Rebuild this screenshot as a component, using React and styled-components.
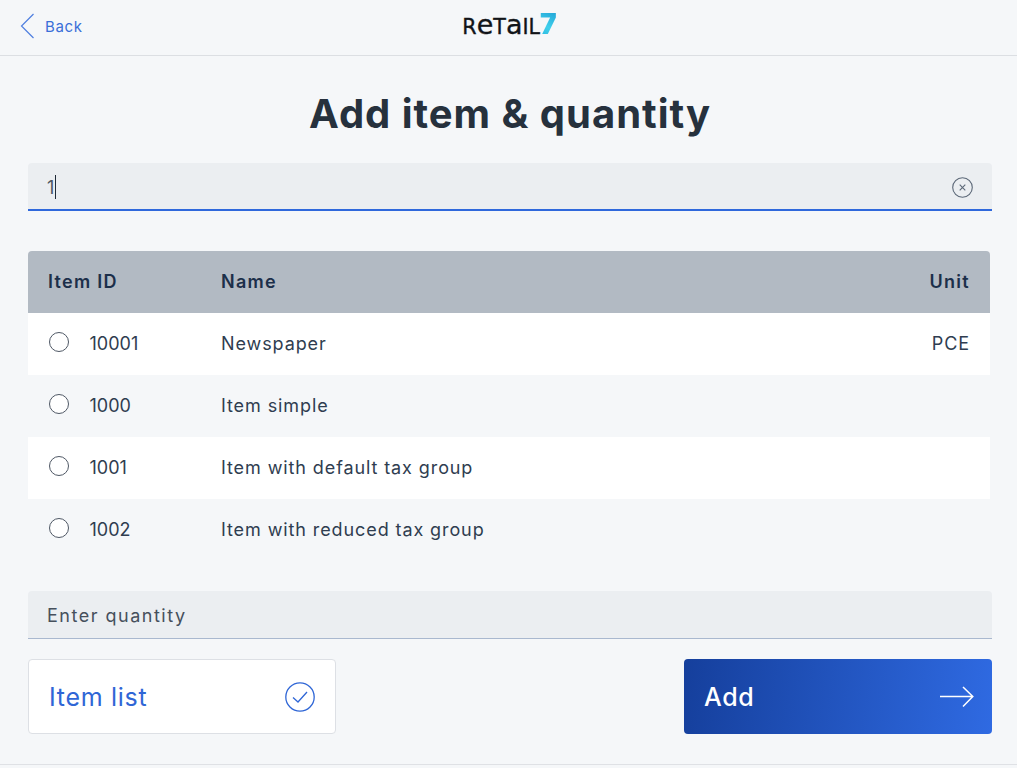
import React from "react";
import styled, { createGlobalStyle } from "styled-components";

const Global = createGlobalStyle`
  html, body { margin: 0; padding: 0; background: #f5f7f9; }
  body { font-family: "Inter", "Noto Sans", sans-serif; color: #2a3644; }
  * { box-sizing: border-box; }
`;

const Page = styled.div`
  width: 1017px; height: 768px; display: flex; flex-direction: column; overflow: hidden;
  background: #f5f7f9;
`;
const Header = styled.header`
  height: 56px; flex: none; display: grid; grid-template-columns: 1fr auto 1fr; align-items: center;
  border-bottom: 1px solid #dcdfe3;
`;
const BackLink = styled.a`
  display: flex; align-items: center; gap: 10px; margin: -3px 0 0 20px;
  color: #3a6fd8; font-size: 15px; letter-spacing: .65px;
`;
const Logo = styled.div`
  display: flex; align-items: baseline; margin: -8px 0 0 2px;
  font-family: "DejaVu Sans", sans-serif; color: #111418; font-weight: 400; font-size: 20.6px; line-height: 1;
  -webkit-text-stroke: .35px #111418;
`;
const LogoLow = styled.span`
  font-size: 27px;
`;
const LogoSeven = styled.span`
  font-family: "Inter", sans-serif; font-weight: 900; font-size: 28px; line-height: 1; -webkit-text-stroke: 0;
  background: linear-gradient(205deg, #1f9fd4 0%, #3fd0ec 60%, #2ab4dc 100%);
  -webkit-background-clip: text; background-clip: text; color: transparent;
`;
const Main = styled.main`
  flex: 1; display: flex; flex-direction: column; padding: 0 25px 0 28px;
`;
const Title = styled.h1`
  margin: 32px 0 23px; height: 52px; line-height: 52px; text-align: center; font-size: 40px; font-weight: 700; color: #26313d; letter-spacing: .98px;
`;
const Field = styled.div`
  height: 48px; display: flex; align-items: center; justify-content: space-between; padding: 2px 19px 0 19px;
  background: #ebeef1; border-radius: 4px 4px 0 0; border-bottom: ${p => p.$active ? "2px solid #2f68dc" : "1px solid #a9b8cf"};
  font-size: 18px; color: #46505c; letter-spacing: ${p => p.$active ? 0.4 : 1.5}px;
`;
const Typed = styled.span`
  display: flex; align-items: center; color: #4c5661;
`;
const Caret = styled.span`
  display: inline-block; width: 1px; height: 24px; background: #1f2a37;
`;
const Table = styled.div`
  width: 962px; margin: 40px 0 30px; display: flex; flex-direction: column;
`;
const Row = styled.div`
  height: 62px; display: grid; grid-template-columns: 173px 1fr auto; align-items: center; padding: 0 20px;
  font-size: 18px; letter-spacing: .9px; color: #2f3d50;
  background: ${p => p.$white ? "#fff" : "transparent"};
`;
const HeadRow = styled(Row)`
  background: #b2bac3; border-radius: 4px 4px 0 0; font-weight: 600; color: #1c2f4a; letter-spacing: 1.3px;
`;
const IdCell = styled.div`
  display: flex; align-items: center; gap: 21.5px; margin-top: -1px; letter-spacing: 0;
`;
const Radio = styled.span`
  width: 20px; height: 20px; margin: -3px 0 0 0; border-radius: 50%; border: 1px solid #4f5865; background: #fff; flex: none;
  position: relative; left: .5px;
`;
const Cell = styled.div`
  margin-top: -1px;
`;
const Actions = styled.div`
  margin-top: 20px; display: flex; justify-content: space-between;
`;
const ListButton = styled.button`
  width: 308px; height: 75px; display: flex; align-items: center; justify-content: space-between;
  padding: 0 20px; background: #fff; border: 1px solid #dde0e5; border-radius: 4px; color: #2f66d6;
  font: 400 25px "Inter", sans-serif; letter-spacing: .7px;
`;
const AddButton = styled.button`
  width: 308px; height: 75px; display: flex; align-items: center; justify-content: space-between;
  padding: 0 18px 0 20px; border: 0; border-radius: 4px; color: #fff;
  background: linear-gradient(97deg, #153f9c 0%, #2f6ae2 100%);
  font: 500 25px "Inter", sans-serif; letter-spacing: .6px;
`;
const FootRule = styled.div`
  height: 4px; flex: none; border-top: 1px solid #dfe1e5;
`;

const items = [
  { id: "10001", name: "Newspaper", unit: "PCE" },
  { id: "1000", name: "Item simple" },
  { id: "1001", name: "Item with default tax group" },
  { id: "1002", name: "Item with reduced tax group" },
];

export default function App() {
  return (
    <Page>
      <Global />
      <Header>
        <BackLink>
          <svg width="15" height="26" viewBox="0 0 15 26" fill="none" stroke="#4f7fe0" strokeWidth="1.2"><path d="M13.5 1 1.5 13l12 12" /></svg>
          Back
        </BackLink>
        <Logo>R<LogoLow>e</LogoLow>T<LogoLow>a</LogoLow>IL<LogoSeven>7</LogoSeven></Logo>
        <div />
      </Header>
      <Main>
        <Title>Add item &amp; quantity</Title>
        <Field $active>
          <Typed>1<Caret /></Typed>
          <svg width="21" height="21" viewBox="0 0 21 21" fill="none" stroke="#5c6878" strokeWidth="1.1">
            <circle cx="10.5" cy="10.5" r="9.8" /><path d="M7.7 7.7l5.6 5.6M13.3 7.7l-5.6 5.6" />
          </svg>
        </Field>
        <Table>
          <HeadRow><Cell>Item ID</Cell><Cell>Name</Cell><Cell>Unit</Cell></HeadRow>
          {items.map((it, i) => (
            <Row key={it.id} $white={i % 2 === 0}>
              <IdCell><Radio />{it.id}</IdCell>
              <Cell>{it.name}</Cell>
              <Cell>{it.unit}</Cell>
            </Row>
          ))}
        </Table>
        <Field>Enter quantity</Field>
        <Actions>
          <ListButton>
            Item list
            <svg width="30" height="30" viewBox="0 0 30 30" fill="none" stroke="#2f66d6" strokeWidth="1.3">
              <circle cx="15" cy="15" r="14.2" /><path d="M8 15.5l5 4.5 9-10" />
            </svg>
          </ListButton>
          <AddButton>
            Add
            <svg width="34" height="22" viewBox="0 0 34 22" fill="none" stroke="#fff" strokeWidth="1.5"><path d="M0 10.5h32.5M23 1l9.8 9.5L23 20.5" /></svg>
          </AddButton>
        </Actions>
      </Main>
      <FootRule />
    </Page>
  );
}
